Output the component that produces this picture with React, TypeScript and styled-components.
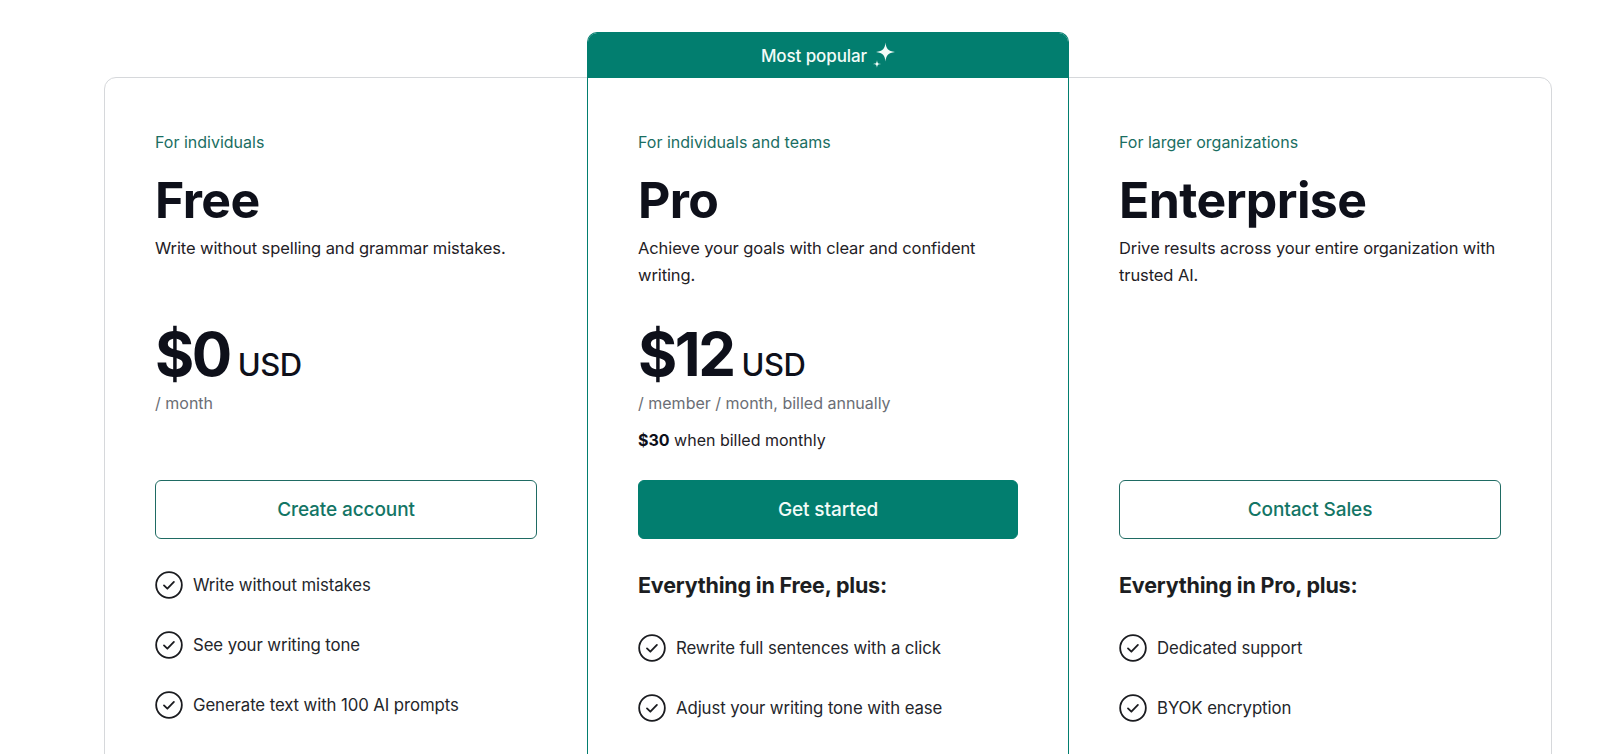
import React from "react";
import styled, { createGlobalStyle, css } from "styled-components";

const GlobalStyle = createGlobalStyle`
  * { box-sizing: border-box; }
  html, body { margin: 0; padding: 0; background: #ffffff; overflow: hidden; }
  body {
    font-family: Inter, "Noto Sans", Arial, sans-serif;
    color: #0e101a;
    -webkit-font-smoothing: antialiased;
  }
`;

const TEAL = "#027e6f";

const Page = styled.main`
  padding: 77px 0 0 104px;
`;

const Card = styled.div`
  width: 1448px;
  min-height: 760px;
  border: 1px solid #d6d8db;
  border-radius: 12px;
  display: grid;
  grid-template-columns: repeat(3, 1fr);
`;

const Column = styled.section<{ $featured?: boolean }>`
  display: flex;
  flex-direction: column;
  ${(p) =>
    p.$featured &&
    css`
      margin-top: -46px;
      border: 1px solid ${TEAL};
      border-bottom: none;
      border-radius: 10px 10px 0 0;
    `}
`;

const Ribbon = styled.div`
  height: 45px;
  background: ${TEAL};
  border-radius: 9px 9px 0 0;
  display: flex;
  align-items: center;
  justify-content: center;
  gap: 6px;
  color: #f2fbf8;
  font-size: 17px;
  font-weight: 500;
  letter-spacing: -0.1px;
  svg { margin-top: -1px; }
`;

const Body = styled.div`
  padding: 52px 50px 0 50px;
  display: flex;
  flex-direction: column;
`;

const Eyebrow = styled.div`
  font-size: 16px;
  line-height: 24px;
  color: #1a6e62;
  margin-bottom: 16px;
`;

const Title = styled.h2`
  margin: 0 0 5px;
  font-size: 50px;
  line-height: 60px;
  font-weight: 700;
  letter-spacing: -0.6px;
  color: #0e101a;
`;

const Description = styled.p`
  margin: 0 0 35px;
  min-height: 54px;
  font-size: 16.5px;
  line-height: 27px;
  color: #1f2126;
  letter-spacing: -0.1px;
`;

const PriceBlock = styled.div`
  height: 156px;
  display: flex;
  flex-direction: column;
`;

const PriceRow = styled.div`
  display: flex;
  align-items: baseline;
  gap: 8px;
`;

const Amount = styled.span`
  font-size: 60px;
  line-height: 60px;
  font-weight: 700;
  letter-spacing: -2.5px;
  color: #0e101a;
`;

const Currency = styled.span`
  font-size: 31px;
  font-weight: 500;
  letter-spacing: -0.5px;
  color: #0e101a;
`;

const Period = styled.div`
  margin-top: 7px;
  font-size: 16px;
  line-height: 24px;
  color: #6b6e75;
`;

const Monthly = styled.div`
  margin-top: 13px;
  font-size: 16px;
  line-height: 24px;
  color: #1f2126;
  strong { font-weight: 700; color: #0e101a; }
`;

const CTA = styled.button<{ $primary?: boolean }>`
  height: 59px;
  width: 100%;
  border-radius: 6px;
  font-family: inherit;
  font-size: 19px;
  font-weight: 500;
  letter-spacing: -0.1px;
  cursor: pointer;
  ${(p) =>
    p.$primary
      ? css`
          background: ${TEAL};
          border: 1px solid ${TEAL};
          color: #f2fbf8;
        `
      : css`
          background: #ffffff;
          border: 1px solid #1f6b63;
          color: #137565;
        `}
`;

const Features = styled.div`
  margin-top: 32px;
  display: flex;
  flex-direction: column;
`;

const FeatureHeading = styled.h3`
  margin: 0 0 35px;
  font-size: 21.5px;
  line-height: 28px;
  font-weight: 700;
  color: #1c1e22;
  letter-spacing: -0.2px;
`;

const FeatureList = styled.ul`
  list-style: none;
  margin: 0;
  padding: 0;
  display: flex;
  flex-direction: column;
  gap: 33px;
`;

const Feature = styled.li`
  display: flex;
  align-items: center;
  gap: 10px;
  height: 27px;
  font-size: 16.8px;
  color: #24262b;
  letter-spacing: -0.1px;
`;

const CheckIcon = () => (
  <svg width="28" height="28" viewBox="0 0 24 24" fill="none" stroke="#1b1c20" strokeWidth="1.55" strokeLinecap="round" strokeLinejoin="round" style={{ flexShrink: 0 }}>
    <circle cx="12" cy="12" r="11" />
    <path d="M7.7 12.3l2.9 2.9 5.6-5.8" />
  </svg>
);

const Sparkle = () => (
  <svg width="22" height="26" viewBox="0 0 22 26" fill="#f2fbf8">
    <path d="M12.5 0.5 C13.2 7 15 8.9 22 10 C15 11.1 13.2 13 12.5 19.5 C11.8 13 10 11.1 3 10 C10 8.9 11.8 7 12.5 0.5 Z" />
    <path d="M4 18 C4.3 21 4.9 21.7 8 22 C4.9 22.3 4.3 23 4 26 C3.7 23 3.1 22.3 0 22 C3.1 21.7 3.7 21 4 18 Z" />
  </svg>
);

type Plan = {
  eyebrow: string;
  title: string;
  description: string;
  amount?: string;
  period?: string;
  monthly?: string;
  cta: string;
  primary?: boolean;
  featured?: boolean;
  heading?: string;
  features: string[];
};

const plans: Plan[] = [
  {
    eyebrow: "For individuals",
    title: "Free",
    description: "Write without spelling and grammar mistakes.",
    amount: "$0",
    period: "/ month",
    cta: "Create account",
    features: ["Write without mistakes", "See your writing tone", "Generate text with 100 AI prompts"],
  },
  {
    eyebrow: "For individuals and teams",
    title: "Pro",
    description: "Achieve your goals with clear and confident writing.",
    amount: "$12",
    period: "/ member / month, billed annually",
    monthly: "$30",
    cta: "Get started",
    primary: true,
    featured: true,
    heading: "Everything in Free, plus:",
    features: ["Rewrite full sentences with a click", "Adjust your writing tone with ease"],
  },
  {
    eyebrow: "For larger organizations",
    title: "Enterprise",
    description: "Drive results across your entire organization with trusted AI.",
    cta: "Contact Sales",
    heading: "Everything in Pro, plus:",
    features: ["Dedicated support", "BYOK encryption"],
  },
];

export default function App() {
  return (
    <>
      <GlobalStyle />
      <Page>
        <Card>
          {plans.map((plan) => (
            <Column key={plan.title} $featured={plan.featured}>
              {plan.featured && (
                <Ribbon>
                  Most popular
                  <Sparkle />
                </Ribbon>
              )}
              <Body>
                <Eyebrow>{plan.eyebrow}</Eyebrow>
                <Title>{plan.title}</Title>
                <Description>{plan.description}</Description>
                <PriceBlock>
                  {plan.amount && (
                    <>
                      <PriceRow>
                        <Amount>{plan.amount}</Amount>
                        <Currency>USD</Currency>
                      </PriceRow>
                      <Period>{plan.period}</Period>
                    </>
                  )}
                  {plan.monthly && (
                    <Monthly>
                      <strong>{plan.monthly}</strong> when billed monthly
                    </Monthly>
                  )}
                </PriceBlock>
                <CTA $primary={plan.primary}>{plan.cta}</CTA>
                <Features>
                  {plan.heading && <FeatureHeading>{plan.heading}</FeatureHeading>}
                  <FeatureList>
                    {plan.features.map((f) => (
                      <Feature key={f}>
                        <CheckIcon />
                        {f}
                      </Feature>
                    ))}
                  </FeatureList>
                </Features>
              </Body>
            </Column>
          ))}
        </Card>
      </Page>
    </>
  );
}
